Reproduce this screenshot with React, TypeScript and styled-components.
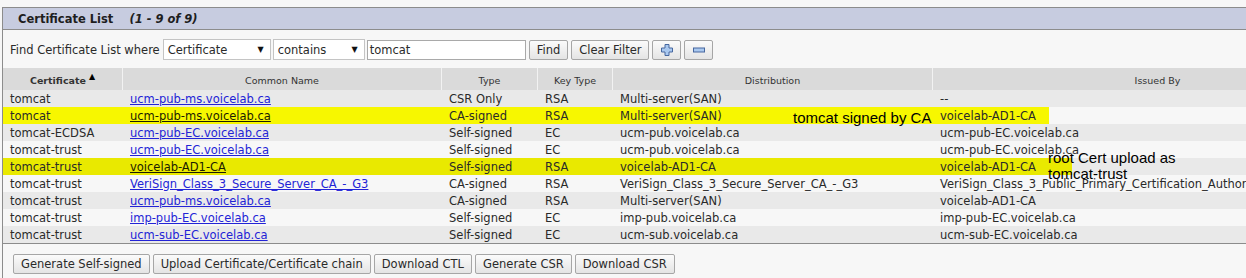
import React from 'react';
import styled, { createGlobalStyle } from 'styled-components';

const GlobalStyle = createGlobalStyle`
  html, body {
    margin: 0;
    padding: 0;
    background: #f7f7f7;
    overflow: hidden;
  }
  body {
    font-family: "DejaVu Sans", Verdana, sans-serif;
    font-size: 11.5px;
    color: #2a2a2a;
  }
`;

const COLS = '119px 319px 96px 75px 320px 450px';

interface CertRow {
  cert: string;
  name: string;
  type: string;
  key: string;
  dist: string;
  issuer: string;
  mark?: number;
}

const rows: CertRow[] = [
  { cert: 'tomcat', name: 'ucm-pub-ms.voicelab.ca', type: 'CSR Only', key: 'RSA', dist: 'Multi-server(SAN)', issuer: '--' },
  { cert: 'tomcat', name: 'ucm-pub-ms.voicelab.ca', type: 'CA-signed', key: 'RSA', dist: 'Multi-server(SAN)', issuer: 'voicelab-AD1-CA', mark: 1046 },
  { cert: 'tomcat-ECDSA', name: 'ucm-pub-EC.voicelab.ca', type: 'Self-signed', key: 'EC', dist: 'ucm-pub.voicelab.ca', issuer: 'ucm-pub-EC.voicelab.ca' },
  { cert: 'tomcat-trust', name: 'ucm-pub-EC.voicelab.ca', type: 'Self-signed', key: 'EC', dist: 'ucm-pub.voicelab.ca', issuer: 'ucm-pub-EC.voicelab.ca' },
  { cert: 'tomcat-trust', name: 'voicelab-AD1-CA', type: 'Self-signed', key: 'RSA', dist: 'voicelab-AD1-CA', issuer: 'voicelab-AD1-CA', mark: 1069 },
  { cert: 'tomcat-trust', name: 'VeriSign_Class_3_Secure_Server_CA_-_G3', type: 'CA-signed', key: 'RSA', dist: 'VeriSign_Class_3_Secure_Server_CA_-_G3', issuer: 'VeriSign_Class_3_Public_Primary_Certification_Authority_-_G5' },
  { cert: 'tomcat-trust', name: 'ucm-pub-ms.voicelab.ca', type: 'CA-signed', key: 'RSA', dist: 'Multi-server(SAN)', issuer: 'voicelab-AD1-CA' },
  { cert: 'tomcat-trust', name: 'imp-pub-EC.voicelab.ca', type: 'Self-signed', key: 'EC', dist: 'imp-pub.voicelab.ca', issuer: 'imp-pub-EC.voicelab.ca' },
  { cert: 'tomcat-trust', name: 'ucm-sub-EC.voicelab.ca', type: 'Self-signed', key: 'EC', dist: 'ucm-sub.voicelab.ca', issuer: 'ucm-sub-EC.voicelab.ca' },
];

const App: React.FC = () => {
  return (
    <Page>
      <GlobalStyle />
      <Frame>
        <TitleBar>
          <span>Certificate List</span>
          <Count>(1 - 9 of 9)</Count>
        </TitleBar>

        <FilterBar>
          <FilterLabel>Find Certificate List where</FilterLabel>
          <Select width={96}>
            Certificate<Caret>▼</Caret>
          </Select>
          <Select width={80}>
            contains<Caret>▼</Caret>
          </Select>
          <SearchInput>tomcat</SearchInput>
          <Button>Find</Button>
          <Button>Clear Filter</Button>
          <IconButton>
            <svg width="16" height="16" viewBox="0 0 16 16">
              <path
                d="M6 2.5h4v3.5h3.5v4H10v3.5H6V10H2.5V6H6z"
                fill="#a9c8ef"
                stroke="#46679f"
                strokeWidth="1"
              />
            </svg>
          </IconButton>
          <IconButton>
            <svg width="16" height="16" viewBox="0 0 16 16">
              <rect x="2.5" y="6" width="11" height="4" fill="#a9c8ef" stroke="#46679f" strokeWidth="1" />
            </svg>
          </IconButton>
        </FilterBar>

        <Table>
          <HeadRow>
            <HeadCell sorted>
              Certificate<SortArrow>▲</SortArrow>
            </HeadCell>
            <HeadCell>Common Name</HeadCell>
            <HeadCell>Type</HeadCell>
            <HeadCell>Key Type</HeadCell>
            <HeadCell>Distribution</HeadCell>
            <HeadCell>Issued By</HeadCell>
          </HeadRow>
          {rows.map((r, i) => (
            <Row key={i} alt={i % 2 === 1} mark={r.mark}>
              <Cell>{r.cert}</Cell>
              <Cell>
                <NameLink href="#" marked={!!r.mark}>
                  {r.name}
                </NameLink>
              </Cell>
              <Cell>{r.type}</Cell>
              <Cell>{r.key}</Cell>
              <Cell>{r.dist}</Cell>
              <Cell>{r.issuer}</Cell>
            </Row>
          ))}
        </Table>

        <Footer>
          <Button>Generate Self-signed</Button>
          <Button>Upload Certificate/Certificate chain</Button>
          <Button>Download CTL</Button>
          <Button>Generate CSR</Button>
          <Button>Download CSR</Button>
        </Footer>
      </Frame>

      <Note left={793} top={110}>
        tomcat signed by CA
      </Note>
      <Note left={1048} top={150}>
        root Cert upload as
        <br />
        tomcat-trust
      </Note>
    </Page>
  );
};

export default App;

const Page = styled.div`
  position: relative;
  width: 1400px;
  height: 278px;
  padding-top: 7px;
  box-sizing: border-box;
`;

const Frame = styled.div`
  margin-left: 2px;
  border-left: 1px solid #8c8c8c;
  height: 271px;
`;

const TitleBar = styled.div`
  height: 21px;
  display: flex;
  align-items: center;
  gap: 16px;
  padding-left: 15px;
  background: #c7cce0;
  border-top: 1px solid #8c8c8c;
  border-bottom: 1px solid #8c8c8c;
  font-weight: bold;
  font-size: 11.5px;
  color: #1e1e1e;
`;

const Count = styled.span`
  font-style: italic;
`;

const FilterBar = styled.div`
  height: 38px;
  display: flex;
  align-items: center;
  padding-left: 7px;
  padding-top: 1px;
  box-sizing: border-box;
`;

const FilterLabel = styled.span`
  margin-right: 3px;
`;

const Select = styled.div<{ width: number }>`
  width: ${p => p.width}px;
  height: 19px;
  display: flex;
  align-items: center;
  justify-content: space-between;
  padding: 0 6px 0 4px;
  margin-right: 2px;
  box-sizing: content-box;
  background: #fff;
  border: 1px solid #c4c4c4;
`;

const Caret = styled.span`
  font-size: 8px;
  color: #111;
`;

const SearchInput = styled.div`
  width: 155px;
  height: 18px;
  display: flex;
  align-items: center;
  padding-left: 2px;
  margin-right: 3px;
  background: #fff;
  border: 1px solid #a9a9a9;
  box-sizing: content-box;
`;

const Button = styled.button`
  height: 20px;
  padding: 0 7px;
  margin-right: 3px;
  font-family: inherit;
  font-size: 11.5px;
  color: #2a2a2a;
  background: linear-gradient(#fbfbfb, #e4e4e4);
  border: 1px solid #a6a6a6;
  border-radius: 2px;
  white-space: nowrap;
`;

const IconButton = styled(Button)`
  width: 29px;
  padding: 0;
  display: flex;
  align-items: center;
  justify-content: center;
`;

const Table = styled.div`
  display: flex;
  flex-direction: column;
`;

const HeadRow = styled.div`
  display: grid;
  grid-template-columns: ${COLS};
  height: 22px;
  background: #dadada;
`;

const HeadCell = styled.div<{ sorted?: boolean }>`
  display: flex;
  align-items: center;
  justify-content: center;
  font-size: 9.5px;
  font-weight: ${p => (p.sorted ? 'bold' : 'normal')};
  color: #333;
  padding-top: 3px;
  & + & {
    border-left: 1px solid #f2f2f2;
  }
`;

const SortArrow = styled.span`
  font-size: 8px;
  margin-left: 3px;
  position: relative;
  top: -4px;
  color: #000;
`;

const Row = styled.div<{ alt: boolean; mark?: number }>`
  display: grid;
  grid-template-columns: ${COLS};
  height: 17px;
  align-items: center;
  background: ${p => {
    const base = p.alt ? '#f7f7f7' : '#e9e9e9';
    const hi = p.alt ? '#f7f700' : '#e9e900';
    return p.mark ? `linear-gradient(to right, ${hi} 0 ${p.mark}px, ${base} ${p.mark}px)` : base;
  }};
`;

const Cell = styled.div`
  padding-left: 8px;
  white-space: nowrap;
  overflow: hidden;
  &:first-child {
    padding-left: 7px;
  }
`;

const NameLink = styled.a<{ marked: boolean }>`
  color: ${p => (p.marked ? '#1c1c00' : '#2323d6')};
  text-decoration: underline;
`;

const Footer = styled.div`
  border-top: 1px solid #8c8c8c;
  display: flex;
  padding: 10px 0 0 10px;
`;

const Note = styled.div<{ left: number; top: number }>`
  position: absolute;
  left: ${p => p.left}px;
  top: ${p => p.top}px;
  font-family: "Liberation Sans", Arial, sans-serif;
  font-size: 15px;
  line-height: 16px;
  color: #000;
  white-space: nowrap;
`;
